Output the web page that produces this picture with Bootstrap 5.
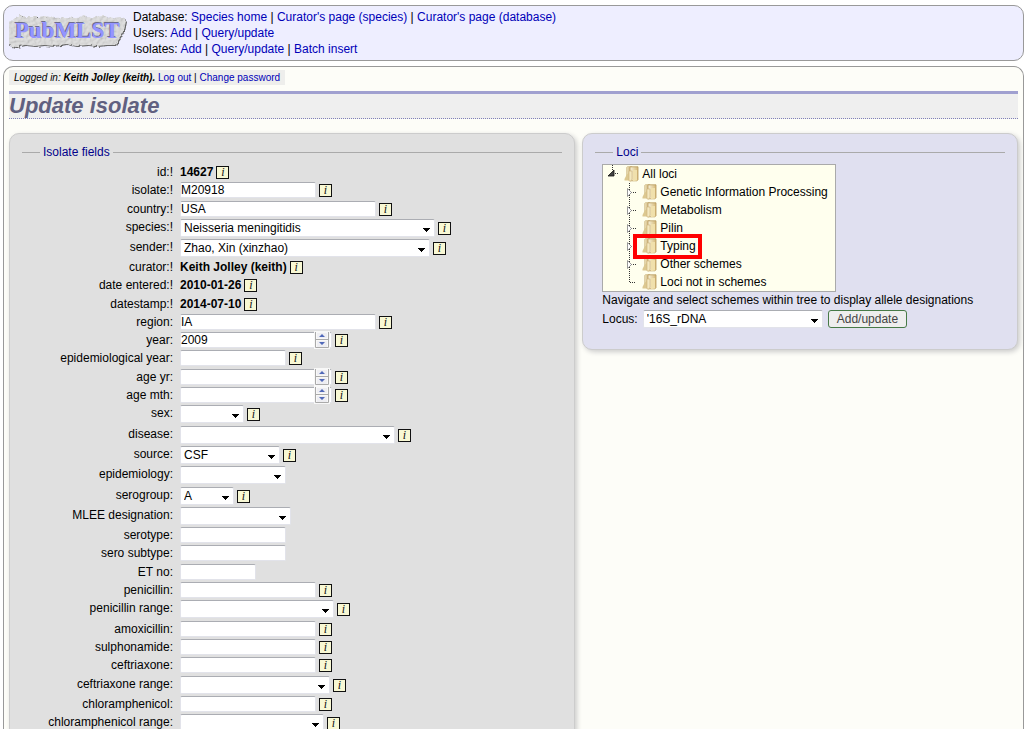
<!DOCTYPE html>
<html lang="en">
<head>
<meta charset="utf-8">
<meta name="viewport" content="width=device-width, initial-scale=1">
<title>Update isolate - PubMLST</title>
<link href="https://cdn.jsdelivr.net/npm/bootstrap@5.3.0/dist/css/bootstrap.min.css" rel="stylesheet">
<style>
  body { font-family: "Liberation Sans", Arial, sans-serif; font-size: 12px; line-height: 16px; color: #000; background: #fff; padding: 5px 3px 0; }
  a { color: #0000b8; text-decoration: none; }
  .site-head { background: #eeeeff; border: 1px solid #999; border-radius: 10px; padding: 3px 5px; gap: 3px; }
  .page-main { background: #fdfdf8; border: 1px solid #999; border-bottom: 0; border-radius: 10px 10px 0 0; margin-top: 5px; padding: 3px 5px 0; min-height: 0; }
  .login-note { font-size: 10px; line-height: 15px; background: #eeeeec; padding: 0 5px; align-self: flex-start; }
  .page-title { font-size: 22px; line-height: 24px; font-weight: bold; font-style: italic; color: #606080; background: #efefef; border-top: 3px solid #a0a0d0; border-bottom: 1px dotted #8080b8; margin: 6px 0 14px; }
  .panels { display: grid; grid-template-columns: 13fr 10fr; gap: 7px; align-items: start; }
  .panel { border: 1px solid #ccc; border-radius: 10px; box-shadow: 2px 2px 5px #ccc; padding: 9px 12px; min-width: 0; }
  .panel-fields { background: #e0e0e0; }
  .panel-loci { background: #e0e0f0; padding-bottom: 18px; }
  legend { display: flex; align-items: center; gap: 3px; float: none; font-size: 12px; line-height: 18px; color: #00008b; margin: 0; }
  legend::before, legend::after { content: ""; border-top: 1px solid #aaa; width: 18px; }
  legend::after { flex: 1; }
  .field-groups { padding-top: 3px; }
  .field-group { list-style: none; margin: 0 0 1px; padding: 0; }
  .field-group li { display: flex; align-items: flex-start; gap: 3px; height: 18px; }
  .field-group li.has-menu { height: 20px; }
  .field-name { width: 151px; margin-right: 4px; text-align: right; flex: none; }
  .box-input, .box-menu { font: inherit; font-size: 12px; color: #000; background: #fff; border: 1px solid #e2e3ea; border-top-color: #abadb3; border-radius: 2px; padding: 0 2px 0 0; height: 16px; line-height: 14px; }
  .box-menu { height: 18px; padding: 0 16px 0 3px; -webkit-appearance: none; appearance: none; background: #fff url("data:image/svg+xml,%3Csvg xmlns='http://www.w3.org/2000/svg' width='7' height='4'%3E%3Cpath d='M0 0h7v1H6v1H5v1H4v1H3V3H2V2H1V1H0z'/%3E%3C/svg%3E") no-repeat right 4px top 8px; }
  .w-xs { width: 54px; } .w-sex { width: 64px; } .w-et { width: 76px; } .w-source { width: 100px; }
  .w-sm { width: 106px; } .w-mlee { width: 111px; } .w-md { width: 136px; } .w-ceft { width: 150px; } .w-pen { width: 154px; }
  .w-chlor { width: 144px; } .w-locus { width: 180px; } .w-lg { width: 196px; } .w-disease { width: 215px; }
  .w-sender { width: 250px; } .w-species { width: 255px; }
  input[type=number] { -moz-appearance: textfield; appearance: textfield; width: 152px; }
  input[type=number]::-webkit-inner-spin-button { -webkit-appearance: none; margin: 0; }
  .stepper { position: relative; display: flex; height: 16px; }
  .stepper svg { position: absolute; right: 2px; top: -1px; }
  .info-mark { width: 13px; height: 13px; border: 1px solid #111; background: #f8f8d4; color: #111; font: italic 12px/10px "Liberation Serif", serif; text-align: center; flex: none; margin-top: 2px; }
  .has-menu .info-mark { margin-top: 3px; }
  .loci-body { padding: 3px 7px; }
  .scheme-tree { width: 234px; border: 1px solid #aaa; background: #ffffee; }
  .scheme-tree ul { list-style: none; margin: 0; padding: 0 0 0 20px; }
  .scheme-tree > ul { padding: 0 0 0 3px; }
  .tree-node { display: flex; align-items: center; height: 18px; gap: 3px; white-space: nowrap; position: relative; }
  .tree-node svg { flex: none; }
  .highlight-box { position: absolute; inset: -3px auto -4px 7px; width: 69px; border: 4px solid #f00; }
  .locus-row { padding-top: 2px; gap: 5px; }
  .save-btn { font-size: 12px; line-height: 14px; color: #444; background: #eee; border: 1px solid #477a47; border-radius: 3px; padding: 0 8px; height: 18px; }
</style>
</head>
<body class="vh-100 d-flex flex-column overflow-hidden">

<svg width="0" height="0" class="position-absolute" aria-hidden="true">
  <defs>
    <linearGradient id="gold" x1="0" x2="1"><stop offset="0" stop-color="#f8f2da"/><stop offset="1" stop-color="#d4b878"/></linearGradient>
    <linearGradient id="goldback" x1="0" x2="1"><stop offset="0" stop-color="#ecdfb8"/><stop offset="1" stop-color="#c8ac70"/></linearGradient>
    <symbol id="folder" viewBox="0 0 15 16">
      <path d="M2.500 1.500Q3 .5 4 .5h4v13H2.500z" fill="url(#goldback)" stroke="#d0bc88" stroke-width=".6"/>
      <path d="M2.500 9L0.500 13v1.500h5V6z" fill="#dcc890"/>
      <path d="M6 .8h8v13l-1 1H6z" fill="url(#gold)" stroke="#b8985c" stroke-width=".8"/>
      <path d="M5 5h3v8l-1 2H5z" fill="#f4e8c0" stroke="#ccb478" stroke-width=".6"/>
      <path d="M9 4h4v10.500L9 15.200z" fill="#f0e0ac"/>
    </symbol>
    <symbol id="branch" viewBox="0 0 13 18">
      <path d="M3.500 0v18M5 9.500h5" stroke="#333" stroke-dasharray="1 1" fill="none"/>
      <path d="M1.500 5.500v8l4-4z" fill="#fff" stroke="#999"/>
    </symbol>
    <symbol id="lastbranch" viewBox="0 0 13 18">
      <path d="M3.500 0v10M4 9.500h6" stroke="#333" stroke-dasharray="1 1" fill="none"/>
    </symbol>
    <symbol id="spin" viewBox="0 0 16 18">
      <path d="M0 0h16v18H0z" fill="#f8f8f8"/>
      <path d="M1.500 1v15.500h13V1M1 8.500h14" fill="none" stroke="#aaa"/>
      <path d="M3 2h10v5H3zM3 10h10v6H3z" fill="#eeeef2"/>
      <path d="M5 6l3-3 3 3zM5 11h6l-3 3z" fill="#5068b8"/>
    </symbol>
  </defs>
</svg>

<header class="site-head d-flex align-items-start">
  <a href="#" aria-label="PubMLST home">
    <svg width="121" height="42" viewBox="0 0 121 42" class="d-block">
      <defs>
        <filter id="stone" x="-5%" y="-10%" width="110%" height="125%" color-interpolation-filters="sRGB">
          <feTurbulence type="fractalNoise" baseFrequency=".3" numOctaves="2" seed="4" result="n"/>
          <feDisplacementMap in="SourceGraphic" in2="n" scale="4" xChannelSelector="R" yChannelSelector="G" result="edge"/>
          <feDiffuseLighting in="n" surfaceScale=".7" diffuseConstant="1.1" lighting-color="#cccccc" result="lit"><feDistantLight azimuth="225" elevation="75"/></feDiffuseLighting>
          <feComposite in="lit" in2="edge" operator="in" result="slab"/>
          <feDropShadow in="slab" dx="1" dy="1" stdDeviation=".6" flood-color="#666"/>
        </filter>
      </defs>
      <path filter="url(#stone)" d="M3 12L7 8l5-2 4 2 12 0 8-1 10 2 10-1 12 1 7-3 6 3 12-2 12 2 6-1 4 2 2 2-2 10-4 7-5 7-8 0-10 1-9-1-12 1-10-2-12 2-10-1-9 1-10-1-10 2-9-3-3-8 1-8-1-6z"/>
      <text x="5" y="28" font-family="Liberation Serif, serif" font-weight="bold" font-size="23" fill="#6c6c90">PubMLST</text>
      <text x="6" y="29" font-family="Liberation Serif, serif" font-weight="bold" font-size="23" fill="#9494ff">PubMLST</text>
    </svg>
  </a>
  <nav aria-label="Curator">
    <div>Database: <a href="#">Species home</a> | <a href="#">Curator's page (species)</a> | <a href="#">Curator's page (database)</a></div>
    <div>Users: <a href="#">Add</a> | <a href="#">Query/update</a></div>
    <div>Isolates: <a href="#">Add</a> | <a href="#">Query/update</a> | <a href="#">Batch insert</a></div>
  </nav>
</header>

<main class="page-main d-flex flex-column flex-grow-1">
  <div class="login-note"><i>Logged in: <b>Keith Jolley (keith).</b></i> <a href="#">Log out</a> | <a href="#">Change password</a></div>
  <h1 class="page-title">Update isolate</h1>

  <form class="panels">
    <div class="panel panel-fields"><fieldset>
      <legend>Isolate fields</legend>
      <div class="field-groups">
        <ul class="field-group">
          <li><span class="field-name">id:!</span><b>14627</b><a href="#" class="info-mark">i</a></li>
          <li><label class="field-name" for="isolate">isolate:!</label><input id="isolate" class="box-input w-md" value="M20918"><a href="#" class="info-mark">i</a></li>
        </ul>
        <ul class="field-group">
          <li><label class="field-name" for="country">country:!</label><input id="country" class="box-input w-lg" value="USA"><a href="#" class="info-mark">i</a></li>
          <li class="has-menu"><label class="field-name" for="species">species:!</label><select id="species" class="box-menu w-species"><option>Neisseria meningitidis</option></select><a href="#" class="info-mark">i</a></li>
          <li class="has-menu"><label class="field-name" for="sender">sender:!</label><select id="sender" class="box-menu w-sender"><option>Zhao, Xin (xinzhao)</option></select><a href="#" class="info-mark">i</a></li>
          <li><span class="field-name">curator:!</span><b>Keith Jolley (keith)</b><a href="#" class="info-mark">i</a></li>
          <li><span class="field-name">date entered:!</span><b>2010-01-26</b><a href="#" class="info-mark">i</a></li>
        </ul>
        <ul class="field-group">
          <li><span class="field-name">datestamp:!</span><b>2014-07-10</b><a href="#" class="info-mark">i</a></li>
          <li><label class="field-name" for="region">region:</label><input id="region" class="box-input w-lg" value="IA"><a href="#" class="info-mark">i</a></li>
          <li><label class="field-name" for="year">year:</label><span class="stepper"><input id="year" type="number" class="box-input" value="2009"><svg width="16" height="18"><use href="#spin"/></svg></span><a href="#" class="info-mark">i</a></li>
          <li><label class="field-name" for="epiyear">epidemiological year:</label><input id="epiyear" class="box-input w-sm"><a href="#" class="info-mark">i</a></li>
        </ul>
        <ul class="field-group">
          <li><label class="field-name" for="ageyr">age yr:</label><span class="stepper"><input id="ageyr" type="number" class="box-input"><svg width="16" height="18"><use href="#spin"/></svg></span><a href="#" class="info-mark">i</a></li>
          <li><label class="field-name" for="agemth">age mth:</label><span class="stepper"><input id="agemth" type="number" class="box-input"><svg width="16" height="18"><use href="#spin"/></svg></span><a href="#" class="info-mark">i</a></li>
          <li class="has-menu"><label class="field-name" for="sex">sex:</label><select id="sex" class="box-menu w-sex"><option></option></select><a href="#" class="info-mark">i</a></li>
        </ul>
        <ul class="field-group">
          <li class="has-menu"><label class="field-name" for="disease">disease:</label><select id="disease" class="box-menu w-disease"><option></option></select><a href="#" class="info-mark">i</a></li>
          <li class="has-menu"><label class="field-name" for="source">source:</label><select id="source" class="box-menu w-source"><option>CSF</option></select><a href="#" class="info-mark">i</a></li>
          <li class="has-menu"><label class="field-name" for="epidemiology">epidemiology:</label><select id="epidemiology" class="box-menu w-sm"><option></option></select></li>
        </ul>
        <ul class="field-group">
          <li class="has-menu"><label class="field-name" for="serogroup">serogroup:</label><select id="serogroup" class="box-menu w-xs"><option>A</option></select><a href="#" class="info-mark">i</a></li>
          <li class="has-menu"><label class="field-name" for="mlee">MLEE designation:</label><select id="mlee" class="box-menu w-mlee"><option></option></select></li>
          <li><label class="field-name" for="serotype">serotype:</label><input id="serotype" class="box-input w-sm"></li>
          <li><label class="field-name" for="subtype">sero subtype:</label><input id="subtype" class="box-input w-sm"></li>
        </ul>
        <ul class="field-group">
          <li><label class="field-name" for="etno">ET no:</label><input id="etno" class="box-input w-et"></li>
          <li><label class="field-name" for="pen">penicillin:</label><input id="pen" class="box-input w-md"><a href="#" class="info-mark">i</a></li>
          <li class="has-menu"><label class="field-name" for="penr">penicillin range:</label><select id="penr" class="box-menu w-pen"><option></option></select><a href="#" class="info-mark">i</a></li>
        </ul>
        <ul class="field-group">
          <li><label class="field-name" for="amox">amoxicillin:</label><input id="amox" class="box-input w-md"><a href="#" class="info-mark">i</a></li>
          <li><label class="field-name" for="sulph">sulphonamide:</label><input id="sulph" class="box-input w-md"><a href="#" class="info-mark">i</a></li>
          <li><label class="field-name" for="ceft">ceftriaxone:</label><input id="ceft" class="box-input w-md"><a href="#" class="info-mark">i</a></li>
        </ul>
        <ul class="field-group">
          <li class="has-menu"><label class="field-name" for="ceftr">ceftriaxone range:</label><select id="ceftr" class="box-menu w-ceft"><option></option></select><a href="#" class="info-mark">i</a></li>
          <li><label class="field-name" for="chlor">chloramphenicol:</label><input id="chlor" class="box-input w-md"><a href="#" class="info-mark">i</a></li>
          <li class="has-menu"><label class="field-name" for="chlorr">chloramphenicol range:</label><select id="chlorr" class="box-menu w-chlor"><option></option></select><a href="#" class="info-mark">i</a></li>
        </ul>
      </div>
    </fieldset></div>

    <div class="panel panel-loci"><fieldset>
      <legend>Loci</legend>
      <div class="loci-body">
        <div class="scheme-tree">
          <ul>
            <li>
              <div class="tree-node"><svg width="15" height="18"><path d="M6.500 0v6M9 8.500h4" stroke="#333" stroke-dasharray="1 1"/><path d="M2 11h6V5z" fill="#444" stroke="#111" stroke-width=".8"/></svg><svg width="15" height="16"><use href="#folder"/></svg>All loci</div>
              <ul>
                <li class="tree-node"><svg width="13" height="18"><use href="#branch"/></svg><svg width="15" height="16"><use href="#folder"/></svg>Genetic Information Processing</li>
                <li class="tree-node"><svg width="13" height="18"><use href="#branch"/></svg><svg width="15" height="16"><use href="#folder"/></svg>Metabolism</li>
                <li class="tree-node"><svg width="13" height="18"><use href="#branch"/></svg><svg width="15" height="16"><use href="#folder"/></svg>Pilin</li>
                <li class="tree-node z-1"><svg width="13" height="18"><use href="#branch"/></svg><svg width="15" height="16"><use href="#folder"/></svg>Typing<span class="highlight-box"></span></li>
                <li class="tree-node"><svg width="13" height="18"><use href="#branch"/></svg><svg width="15" height="16"><use href="#folder"/></svg>Other schemes</li>
                <li class="tree-node"><svg width="13" height="18"><use href="#lastbranch"/></svg><svg width="15" height="16"><use href="#folder"/></svg>Loci not in schemes</li>
              </ul>
            </li>
          </ul>
        </div>
        <div class="text-nowrap">Navigate and select schemes within tree to display allele designations</div>
        <div class="locus-row d-flex align-items-center"><label for="locus">Locus:</label><select id="locus" class="box-menu w-locus"><option>'16S_rDNA</option></select><button type="button" class="save-btn">Add/update</button></div>
      </div>
    </fieldset></div>
  </form>
</main>
<script src="https://cdn.jsdelivr.net/npm/bootstrap@5.3.0/dist/js/bootstrap.bundle.min.js"></script>
</body>
</html>
